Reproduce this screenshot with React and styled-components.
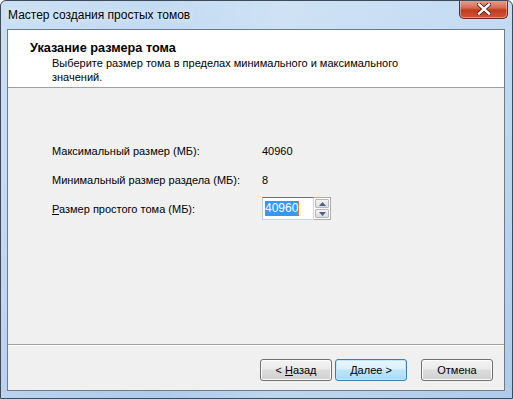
import React from "react";
import styled, { createGlobalStyle } from "styled-components";

const GlobalStyle = createGlobalStyle`
  html, body {
    margin: 0;
    padding: 0;
    background: #ffffff;
  }
  body {
    font-family: "Liberation Sans", Arial, sans-serif;
    font-size: 11px;
    color: #000;
  }
`;

const Window = styled.div`
  width: 513px;
  height: 399px;
  box-sizing: border-box;
  display: flex;
  flex-direction: column;
  border: 1px solid #3d4a5a;
  border-radius: 6px 6px 0 0;
  background: linear-gradient(
      90deg,
      rgba(255, 255, 255, 0.15) 0%,
      rgba(255, 255, 255, 0) 30%,
      rgba(255, 255, 255, 0.2) 55%,
      rgba(255, 255, 255, 0) 100%
    ),
    linear-gradient(180deg, #c3dbf2 0%, #bcd6f1 40%, #aecbea 100%);
  overflow: hidden;
`;

const TitleBar = styled.div`
  height: 28px;
  display: flex;
  justify-content: space-between;
  align-items: flex-start;
  padding-left: 7px;
`;

const Title = styled.div`
  margin-top: 6px;
  font-size: 12px;
  line-height: 16px;
  color: #000;
  text-shadow: 0 0 6px rgba(255, 255, 255, 0.9);
`;

const CloseButton = styled.div`
  width: 49px;
  height: 19px;
  margin-top: -1px;
  margin-right: 4px;
  box-sizing: border-box;
  border: 1px solid #6b2a22;
  border-top: none;
  border-radius: 0 0 5px 5px;
  background: linear-gradient(180deg, #e8a493 0%, #d4694f 45%, #c3391c 55%, #d0553a 100%);
  box-shadow: inset 0 0 0 1px rgba(255, 255, 255, 0.35);
  display: flex;
  align-items: center;
  justify-content: center;
`;

const Client = styled.div`
  flex: 1;
  margin: 0 7px 7px 6px;
  border: 1px solid #6d7c8d;
  background: #f0f0f0;
  display: flex;
  flex-direction: column;
`;

const Header = styled.div`
  height: 58px;
  box-sizing: border-box;
  background: #ffffff;
  border-bottom: 1px solid #a0a0a0;
  padding: 10px 0 0 22px;
`;

const HeaderTitle = styled.div`
  font-weight: bold;
  font-size: 12.7px;
  line-height: 16px;
`;

const HeaderText = styled.div`
  padding-left: 22px;
  line-height: 14px;
  width: 360px;
`;

const Body = styled.div`
  flex: 1;
  display: grid;
  grid-template-columns: 210px auto;
  grid-auto-rows: 23px;
  row-gap: 6px;
  align-items: center;
  align-content: start;
  padding: 51px 0 0 44px;
`;

const Label = styled.div`
  line-height: 16px;
`;

const Value = styled.div`
  line-height: 16px;
`;

const Spinner = styled.div`
  display: flex;
  align-items: stretch;
  height: 23px;
`;

const Edit = styled.div`
  width: 52px;
  box-sizing: border-box;
  border: 1px solid #c5daed;
  border-top-color: #3d7bad;
  border-left-color: #b5cfe7;
  background: #ffffff;
  display: flex;
  align-items: center;
  padding-left: 2px;
`;

const Selected = styled.span`
  background: #3399ff;
  color: #ffffff;
  font-size: 12px;
  line-height: 15px;
  border-right: 1px solid #e0801a;
`;

const SpinBox = styled.div`
  width: 17px;
  box-sizing: border-box;
  border: 1px solid #abadb3;
  border-left: none;
  background: #ffffff;
  display: flex;
  flex-direction: column;
  padding: 1px;
  gap: 1px;
`;

const SpinButton = styled.div`
  flex: 1;
  border: 1px solid #b8b8b8;
  border-radius: 1px;
  background: linear-gradient(180deg, #f4f4f4 0%, #e7e7e7 50%, #dcdcdc 100%);
  display: flex;
  align-items: center;
  justify-content: center;
`;

const Footer = styled.div`
  height: 46px;
  box-sizing: border-box;
  border-top: 1px solid #a0a0a0;
  box-shadow: inset 0 1px 0 #ffffff;
  display: flex;
  justify-content: flex-end;
  align-items: flex-start;
  padding: 14px 11px 0 0;
`;

const Button = styled.div`
  width: 72px;
  height: 22px;
  box-sizing: border-box;
  margin-left: ${props => props.gap || 0}px;
  border: 1px solid ${props => (props.primary ? "#3c7fb1" : "#707070")};
  border-radius: 3px;
  background: ${props =>
    props.primary
      ? "linear-gradient(180deg, #eaf6fd 0%, #d9f0fc 45%, #bee6fd 50%, #a7d9f5 100%)"
      : "linear-gradient(180deg, #f2f2f2 0%, #ebebeb 45%, #dddddd 50%, #cfcfcf 100%)"};
  box-shadow: inset 0 0 0 1px ${props => (props.primary ? "#bde7fb" : "#fcfcfc")};
  display: flex;
  align-items: center;
  justify-content: center;
  line-height: 16px;
  white-space: pre;
`;

const Key = styled.span`
  text-decoration: underline;
`;

const Arrow = ({ up }) => (
  <svg width="7" height="4" viewBox="0 0 7 4">
    <path d={up ? "M0 4 L3.5 0 L7 4 Z" : "M0 0 L3.5 4 L7 0 Z"} fill="#4d6185" />
  </svg>
);

const CloseGlyph = () => (
  <svg width="14" height="12" viewBox="0 0 14 12">
    <path
      d="M2 1.5 L12 10.5 M12 1.5 L2 10.5"
      stroke="#5a1d14"
      strokeWidth="4.2"
      strokeLinecap="square"
    />
    <path
      d="M2 1.5 L12 10.5 M12 1.5 L2 10.5"
      stroke="#ffffff"
      strokeWidth="2.4"
      strokeLinecap="square"
    />
  </svg>
);

export default function App() {
  return (
    <>
      <GlobalStyle />
      <Window>
        <TitleBar>
          <Title>Мастер создания простых томов</Title>
          <CloseButton>
            <CloseGlyph />
          </CloseButton>
        </TitleBar>
        <Client>
          <Header>
            <HeaderTitle>Указание размера тома</HeaderTitle>
            <HeaderText>
              Выберите размер тома в пределах минимального и максимального
              значений.
            </HeaderText>
          </Header>
          <Body>
            <Label>Максимальный размер (МБ):</Label>
            <Value>40960</Value>
            <Label>Минимальный размер раздела (МБ):</Label>
            <Value>8</Value>
            <Label>
              <Key>Р</Key>азмер простого тома (МБ):
            </Label>
            <Spinner>
              <Edit>
                <Selected>40960</Selected>
              </Edit>
              <SpinBox>
                <SpinButton>
                  <Arrow up />
                </SpinButton>
                <SpinButton>
                  <Arrow />
                </SpinButton>
              </SpinBox>
            </Spinner>
          </Body>
          <Footer>
            <Button>
              {"< "}
              <Key>Н</Key>
              {"азад"}
            </Button>
            <Button primary gap={3}>
              {"Далее >"}
            </Button>
            <Button gap={14}>Отмена</Button>
          </Footer>
        </Client>
      </Window>
    </>
  );
}
